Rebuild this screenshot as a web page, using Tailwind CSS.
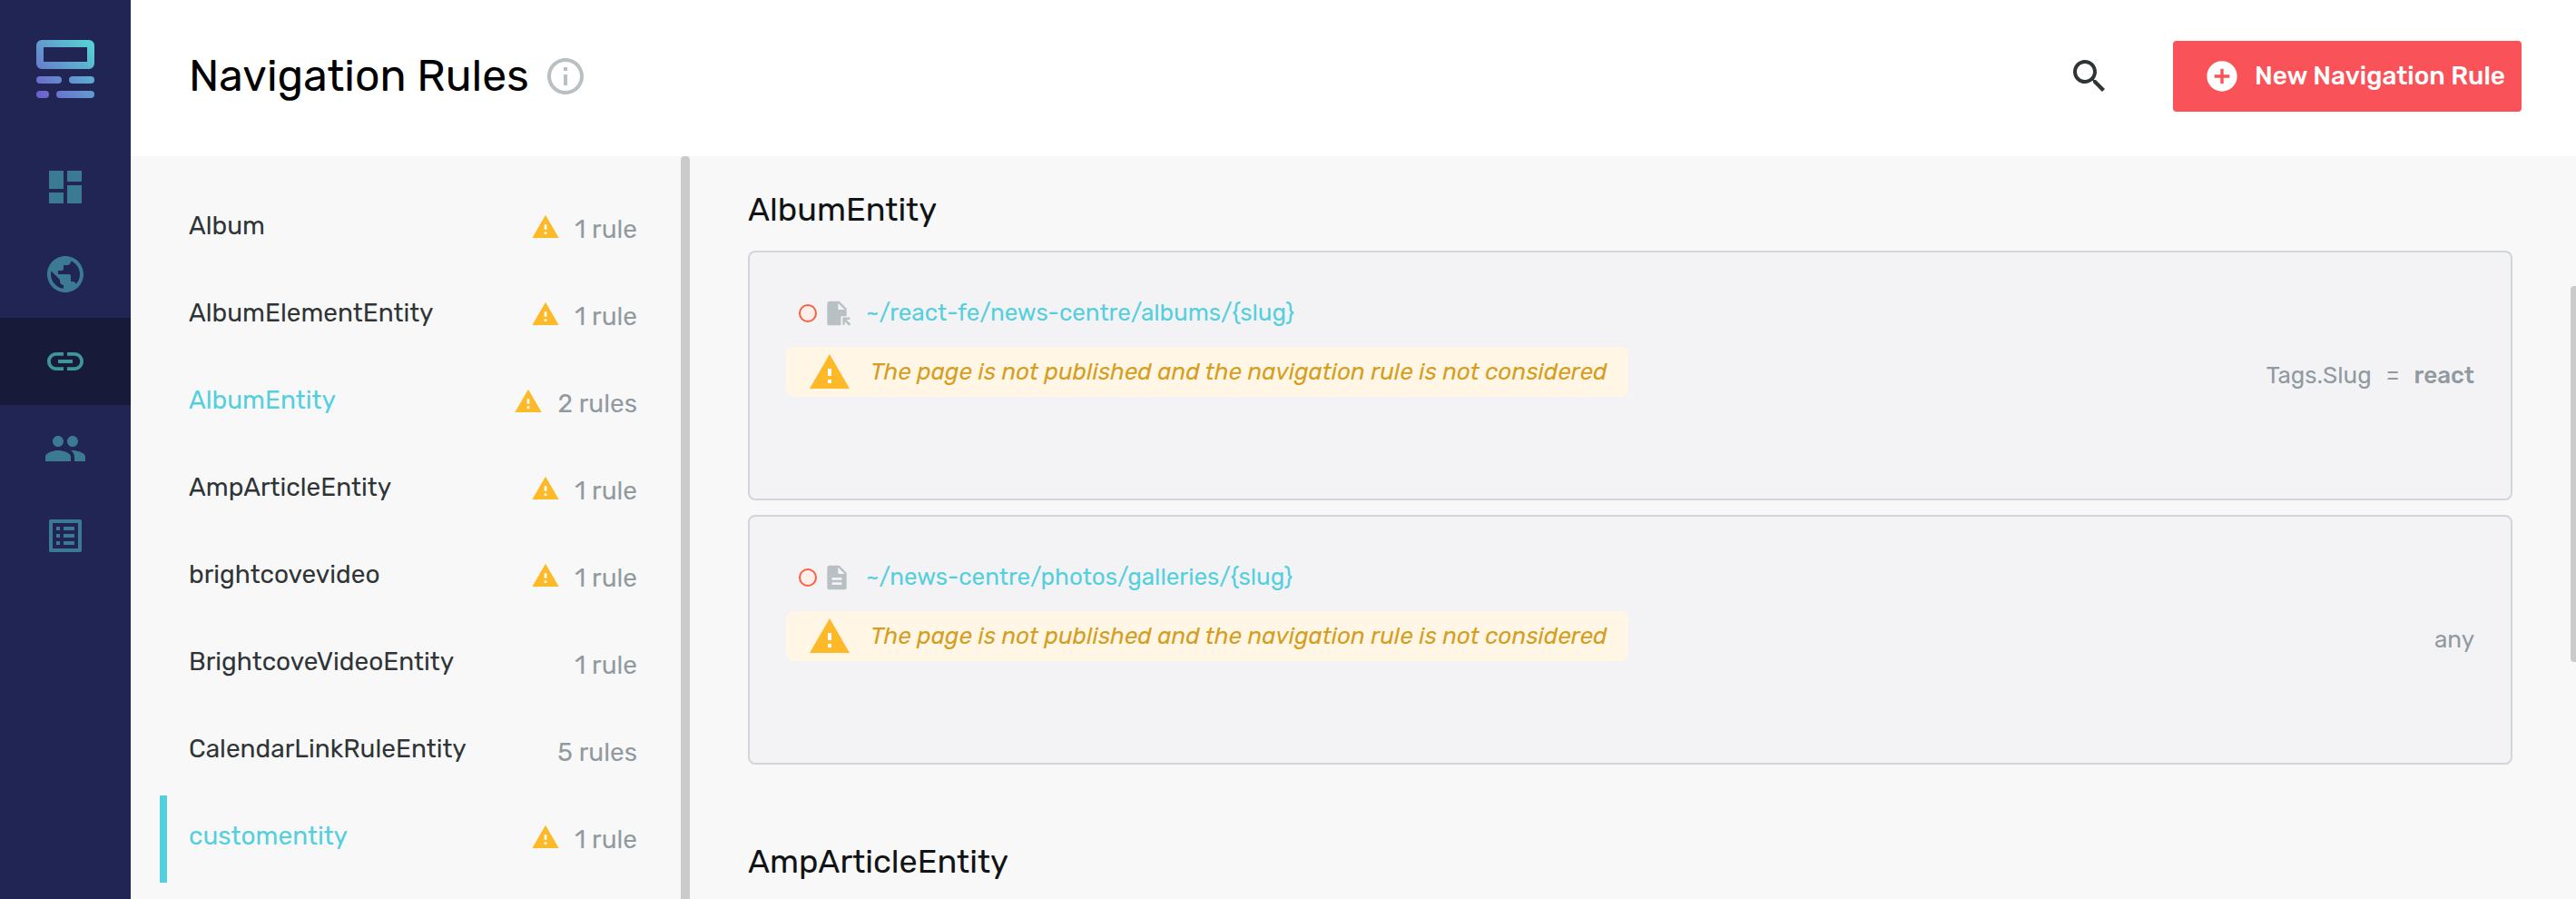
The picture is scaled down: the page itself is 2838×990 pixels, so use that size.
<!DOCTYPE html>
<html lang="en">
<head>
    <meta charset="UTF-8">
    <meta name="viewport" content="width=device-width, initial-scale=1.0">
    <title>Navigation Rules</title>
    <script src="https://cdn.jsdelivr.net/npm/@tailwindcss/browser@4"></script>
</head>
<body class="bg-[#f8f8f8] font-[Rubik,Roboto,sans-serif] overflow-hidden">

    <!-- icons used more than once -->
    <svg class="hidden">
        <symbol id="warning" viewBox="0 0 24 24">
            <path fill="#fff" d="M10 9h4v10h-4z"/>
            <path fill="#fdb927" d="M1 21h22L12 2 1 21zm12-3h-2v-2h2v2zm0-4h-2v-4h2v4z"/>
        </symbol>
    </svg>

    <div class="flex h-[990px] w-[2838px]">
        <!-- sidebar -->
        <nav class="flex w-36 shrink-0 flex-col bg-[#212553] text-[#3b7a92]">
            <div class="flex h-[158px] justify-center pt-11">
                <svg class="size-16" viewBox="0 0 64 64">
                    <defs>
                        <linearGradient id="logo" gradientUnits="userSpaceOnUse" x1="4" y1="64" x2="60" y2="4">
                            <stop offset="0" stop-color="#6e5fcb"/>
                            <stop offset="1" stop-color="#56d0d2"/>
                        </linearGradient>
                    </defs>
                    <g fill="url(#logo)">
                        <path fill-rule="evenodd" d="M6 0h52a6 6 0 0 1 6 6v20a6 6 0 0 1-6 6H6a6 6 0 0 1-6-6V6a6 6 0 0 1 6-6zM8 8v16h48V8z"/>
                        <rect x="0" y="40" width="28" height="8" rx="4"/>
                        <rect x="36" y="40" width="28" height="8" rx="4"/>
                        <rect x="0" y="56" width="14" height="8" rx="4"/>
                        <rect x="22" y="56" width="42" height="8" rx="4"/>
                    </g>
                </svg>
            </div>
            <a class="flex h-24 items-center justify-center">
                <svg class="size-12" viewBox="0 0 24 24" fill="currentColor"><path d="M3 13h8V3H3v10zm0 8h8v-6H3v6zm10 0h8V11h-8v10zm0-18v6h8V3h-8z"/></svg>
            </a>
            <a class="flex h-24 items-center justify-center">
                <svg class="size-12" viewBox="0 0 24 24" fill="currentColor"><path d="M12 2C6.48 2 2 6.48 2 12s4.48 10 10 10 10-4.48 10-10S17.52 2 12 2zm-1 17.93c-3.95-.49-7-3.85-7-7.93 0-.62.08-1.21.21-1.79L9 15v1c0 1.1.9 2 2 2v1.93zm6.9-2.54c-.26-.81-1-1.39-1.9-1.39h-1v-3c0-.55-.45-1-1-1H8v-2h2c.55 0 1-.45 1-1V7h2c1.1 0 2-.9 2-2v-.41c2.93 1.19 5 4.06 5 7.41 0 2.08-.8 3.97-2.1 5.39z"/></svg>
            </a>
            <a class="flex h-24 items-center justify-center bg-[#181a3a] text-[#3d969b]">
                <svg class="size-12" viewBox="0 0 24 24" fill="currentColor"><path d="M3.9 12c0-1.71 1.39-3.1 3.1-3.1h4V7H7c-2.76 0-5 2.24-5 5s2.24 5 5 5h4v-1.9H7c-1.71 0-3.1-1.39-3.1-3.1zM8 13h8v-2H8v2zm9-6h-4v1.9h4c1.71 0 3.1 1.39 3.1 3.1s-1.39 3.1-3.1 3.1h-4V17h4c2.76 0 5-2.24 5-5s-2.24-5-5-5z"/></svg>
            </a>
            <a class="flex h-24 items-center justify-center">
                <svg class="size-12" viewBox="0 0 24 24" fill="currentColor"><path d="M16 11c1.66 0 2.99-1.34 2.99-3S17.66 5 16 5c-1.66 0-3 1.34-3 3s1.34 3 3 3zm-8 0c1.66 0 2.99-1.34 2.99-3S9.66 5 8 5C6.34 5 5 6.34 5 8s1.34 3 3 3zm0 2c-2.33 0-7 1.17-7 3.5V19h14v-2.5c0-2.33-4.67-3.5-7-3.5zm8 0c-.29 0-.62.02-.97.05 1.16.84 1.97 1.97 1.97 3.45V19h6v-2.5c0-2.33-4.67-3.5-7-3.5z"/></svg>
            </a>
            <a class="flex h-24 items-center justify-center">
                <svg class="size-12" viewBox="0 0 24 24" fill="currentColor"><path d="M19 5v14H5V5h14m1.1-2H3.9c-.5 0-.9.4-.9.9v16.2c0 .4.4.9.9.9h16.2c.4 0 .9-.5.9-.9V3.9c0-.5-.5-.9-.9-.9zM11 7h6v2h-6V7zm0 4h6v2h-6v-2zm0 4h6v2h-6v-2zM7 7h2v2H7V7zm0 4h2v2H7v-2zm0 4h2v2H7v-2z"/></svg>
            </a>
        </nav>

        <div class="flex min-w-0 grow flex-col">
            <!-- header -->
            <header class="flex h-[172px] shrink-0 items-center bg-white pr-[60px] pb-1 pl-16">
                <h1 class="text-[48px] leading-none text-black">Navigation Rules</h1>
                <svg class="ml-4 size-12 text-[#b9c0c4]" viewBox="0 0 24 24" fill="currentColor"><path d="M11 7h2v2h-2zm0 4h2v6h-2zm1-9C6.48 2 2 6.48 2 12s4.48 10 10 10 10-4.48 10-10S17.52 2 12 2zm0 18c-4.41 0-8-3.59-8-8s3.59-8 8-8 8 3.59 8 8-3.59 8-8 8z"/></svg>
                <svg class="mr-[68px] ml-auto size-12 text-[#2f3437]" viewBox="0 0 24 24" fill="currentColor"><path d="M15.5 14h-.79l-.28-.27C15.41 12.59 16 11.11 16 9.5 16 5.91 13.09 3 9.5 3S3 5.91 3 9.5 5.91 16 9.5 16c1.61 0 3.09-.59 4.23-1.57l.27.28v.79l5 4.99L20.49 19l-4.99-5zm-6 0C7.01 14 5 11.99 5 9.5S7.01 5 9.5 5 14 7.01 14 9.5 11.99 14 9.5 14z"/></svg>
                <button class="flex h-[78px] w-96 items-center rounded bg-[#f95359] pl-[34px] text-white">
                    <svg class="size-10 shrink-0" viewBox="0 0 24 24" fill="currentColor"><path d="M12 2C6.48 2 2 6.48 2 12s4.48 10 10 10 10-4.48 10-10S17.52 2 12 2zm5 11h-4v4h-2v-4H7v-2h4V7h2v4h4v2z"/></svg>
                    <span class="ml-4 text-[28px] leading-none font-medium whitespace-nowrap">New Navigation Rule</span>
                </button>
            </header>

            <div class="flex min-h-0 grow">
                <!-- entity list -->
                <ul class="w-[606px] shrink-0 pt-8 pr-12 pl-8 text-[28px] leading-none text-[#2f3437]">
                    <li class="flex h-24 items-center border-l-8 border-transparent pl-6">
                        <span class="pb-[7px]">Album</span>
                        <svg class="mr-4 mb-1 ml-auto size-8"><use href="#warning"/></svg>
                        <span class="pt-px text-[#919a9f]">1 rule</span>
                    </li>
                    <li class="flex h-24 items-center border-l-8 border-transparent pl-6">
                        <span class="pb-[7px]">AlbumElementEntity</span>
                        <svg class="mr-4 mb-1 ml-auto size-8"><use href="#warning"/></svg>
                        <span class="pt-px text-[#919a9f]">1 rule</span>
                    </li>
                    <li class="flex h-24 items-center border-l-8 border-transparent pl-6">
                        <span class="pb-[7px] text-[#53cfdd]">AlbumEntity</span>
                        <svg class="mr-4 mb-1 ml-auto size-8"><use href="#warning"/></svg>
                        <span class="pt-px text-[#919a9f]">2 rules</span>
                    </li>
                    <li class="flex h-24 items-center border-l-8 border-transparent pl-6">
                        <span class="pb-[7px]">AmpArticleEntity</span>
                        <svg class="mr-4 mb-1 ml-auto size-8"><use href="#warning"/></svg>
                        <span class="pt-px text-[#919a9f]">1 rule</span>
                    </li>
                    <li class="flex h-24 items-center border-l-8 border-transparent pl-6">
                        <span class="pb-[7px]">brightcovevideo</span>
                        <svg class="mr-4 mb-1 ml-auto size-8"><use href="#warning"/></svg>
                        <span class="pt-px text-[#919a9f]">1 rule</span>
                    </li>
                    <li class="flex h-24 items-center border-l-8 border-transparent pl-6">
                        <span class="pb-[7px]">BrightcoveVideoEntity</span>
                        <span class="ml-auto pt-px text-[#919a9f]">1 rule</span>
                    </li>
                    <li class="flex h-24 items-center border-l-8 border-transparent pl-6">
                        <span class="pb-[7px]">CalendarLinkRuleEntity</span>
                        <span class="ml-auto pt-px text-[#919a9f]">5 rules</span>
                    </li>
                    <li class="flex h-24 items-center border-l-8 border-[#53cfdd] pl-6">
                        <span class="pb-[7px] text-[#53cfdd]">customentity</span>
                        <svg class="mr-4 mb-1 ml-auto size-8"><use href="#warning"/></svg>
                        <span class="pt-px text-[#919a9f]">1 rule</span>
                    </li>
                </ul>

                <div class="w-2.5 shrink-0 rounded-t bg-[#cbcbcb]"></div>

                <!-- rules -->
                <main class="w-[2072px] shrink-0 overflow-hidden px-16">
                    <section>
                        <h2 class="flex h-[104px] items-center pt-[13px] text-[36px] leading-none text-[#111315]">AlbumEntity</h2>

                        <div class="flex h-[275px] items-center justify-between rounded-lg border-2 border-[#d1d6da] bg-[#f3f3f6] px-10">
                            <div class="self-start pt-[43px]">
                                <div class="flex h-12 items-center pl-[14px]">
                                    <span class="size-5 rounded-full border-2 border-[#f9603f] bg-[#ffeeea]"></span>
                                    <svg class="ml-1.5 size-8 text-[#b9c0c4]" viewBox="0 0 24 24" fill="currentColor">
                                        <path d="M14 2H6c-1.1 0-2 .9-2 2v16c0 1.1.9 2 2 2h9.3v-7.6H20V8l-6-6zm-1 7V3.5L18.5 9H13z"/>
                                        <path d="M16.8 15.3h6v1.9h-3l3.7 3.7-1.4 1.4-3.6-3.6v2.9h-1.7z"/>
                                    </svg>
                                    <a class="ml-4 text-[26px] leading-none text-[#53cfdd]">~/react-fe/news-centre/albums/{slug}</a>
                                </div>
                                <div class="mt-[13px] flex h-[55px] w-[928px] items-center rounded-lg bg-[#fff6e6] pl-6">
                                    <svg class="size-12 shrink-0"><use href="#warning"/></svg>
                                    <span class="ml-[21px] text-[26px] leading-none whitespace-nowrap text-[#d69e20] italic">The page is not published and the navigation rule is not considered</span>
                                </div>
                            </div>
                            <div class="flex text-[26px] leading-none text-[#919a9f]">
                                <span>Tags.Slug</span>
                                <span class="mx-4">=</span>
                                <b class="font-medium">react</b>
                            </div>
                        </div>

                        <div class="mt-4 flex h-[275px] items-center justify-between rounded-lg border-2 border-[#d1d6da] bg-[#f3f3f6] px-10">
                            <div class="self-start pt-[43px]">
                                <div class="flex h-12 items-center pl-[14px]">
                                    <span class="size-5 rounded-full border-2 border-[#f9603f] bg-[#ffeeea]"></span>
                                    <svg class="ml-1.5 size-8 text-[#b9c0c4]" viewBox="0 0 24 24" fill="currentColor"><path d="M14 2H6c-1.1 0-1.99.9-1.99 2L4 20c0 1.1.89 2 1.99 2H18c1.1 0 2-.9 2-2V8l-6-6zm2 16H8v-2h8v2zm0-4H8v-2h8v2zm-3-5V3.5L18.5 9H13z"/></svg>
                                    <a class="ml-4 text-[26px] leading-none text-[#53cfdd]">~/news-centre/photos/galleries/{slug}</a>
                                </div>
                                <div class="mt-[13px] flex h-[55px] w-[928px] items-center rounded-lg bg-[#fff6e6] pl-6">
                                    <svg class="size-12 shrink-0"><use href="#warning"/></svg>
                                    <span class="ml-[21px] text-[26px] leading-none whitespace-nowrap text-[#d69e20] italic">The page is not published and the navigation rule is not considered</span>
                                </div>
                            </div>
                            <span class="text-[26px] leading-none text-[#919a9f]">any</span>
                        </div>
                    </section>

                    <section class="mt-12">
                        <h2 class="flex h-[104px] items-center pt-[13px] text-[36px] leading-none text-[#111315]">AmpArticleEntity</h2>
                    </section>
                </main>

                <!-- scrollbar thumb -->
                <div class="mt-[143px] h-[414px] w-1.5 shrink-0 rounded-l bg-[#cbcbcb]"></div>
            </div>
        </div>
    </div>
</body>
</html>
